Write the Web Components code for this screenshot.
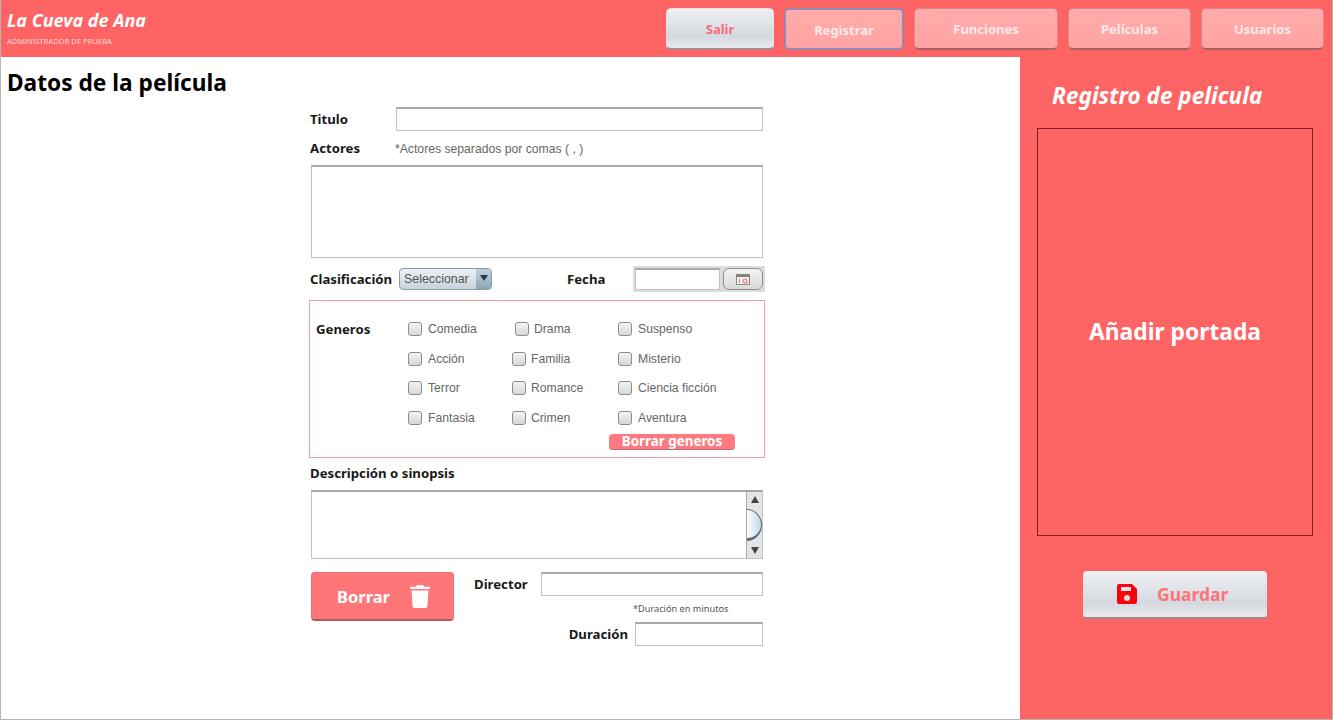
<!DOCTYPE html>
<html lang="es">
<head>
<meta charset="utf-8">
<title>La Cueva de Ana</title>
<style>
    html, body { margin: 0; height: 100%; overflow: hidden; background: #fff; }
    body { font-family: "Noto Sans", "Open Sans", sans-serif; }
</style>
</head>
<body>
<movie-app></movie-app>

<script>
class NavButton extends HTMLElement {
    constructor() {
        super();
        this.attachShadow({ mode: 'open' });
        this.shadowRoot.innerHTML = `
            <style>
                :host {
                    display: flex;
                    align-items: center;
                    justify-content: center;
                    box-sizing: border-box;
                    height: 42px;
                    border-radius: 5px;
                    font: bold 13px "Noto Sans", sans-serif;
                    color: #ffeaea;
                    background: linear-gradient(#ffabab, #ffa3a3);
                    border: 1px solid #df8686;
                    border-bottom: 2px solid #a96262;
                    padding-top: 1px;
                }
                :host([light]) {
                    color: #fb6a78;
                    background: linear-gradient(#eef0f2, #d5d9df 70%, #e6e8ec);
                    border: 1px solid #dfe1e5;
                    border-bottom: 2px solid #a98a90;
                }
                :host([active]) {
                    border: 2px solid #8f8cb0;
                }
            </style>
            <slot></slot>
        `;
    }
}
customElements.define('nav-button', NavButton);

class TopBar extends HTMLElement {
    constructor() {
        super();
        this.attachShadow({ mode: 'open' });
        this.shadowRoot.innerHTML = `
            <style>
                :host {
                    display: flex;
                    justify-content: space-between;
                    box-sizing: border-box;
                    height: 57px;
                    background: #ff6464;
                    padding: 8px 8px 0 6px;
                }
                .brand { color: #fff; }
                .name {
                    font: italic bold 18px/22px "Noto Sans", sans-serif;
                    margin-top: 1px;
                }
                .user {
                    font: 7.6px/10px "Noto Sans", sans-serif;
                    color: #ffd9d9;
                    margin-top: 5px;
                }
                nav { display: flex; gap: 10px; }
                nav-button:nth-child(1) { width: 108px; }
                nav-button:nth-child(2) { width: 120px; }
                nav-button:nth-child(3) { width: 144px; }
                nav-button:nth-child(4) { width: 123px; }
                nav-button:nth-child(5) { width: 123px; }
            </style>
            <div class="brand">
                <div class="name">La Cueva de Ana</div>
                <div class="user">ADMINISTRADOR DE PRUEBA</div>
            </div>
            <nav>
                <nav-button light>Salir</nav-button>
                <nav-button active>Registrar</nav-button>
                <nav-button>Funciones</nav-button>
                <nav-button>Películas</nav-button>
                <nav-button>Usuarios</nav-button>
            </nav>
        `;
    }
}
customElements.define('top-bar', TopBar);

// sunken text box used for inputs and areas
class TextBox extends HTMLElement {
    constructor() {
        super();
        this.attachShadow({ mode: 'open' });
        this.shadowRoot.innerHTML = `
            <style>
                :host {
                    display: flex;
                    justify-content: flex-end;
                    box-sizing: border-box;
                    background: #fff;
                    border: 1px solid #c2c2c2;
                    border-top: 2px solid #a8a8a8;
                }
            </style>
            <slot></slot>
        `;
    }
}
customElements.define('text-box', TextBox);

class GenreCheck extends HTMLElement {
    constructor() {
        super();
        this.attachShadow({ mode: 'open' });
        this.shadowRoot.innerHTML = `
            <style>
                :host {
                    display: flex;
                    align-items: center;
                    gap: var(--check-gap, 6px);
                    font: 12.2px "Liberation Sans", sans-serif;
                    color: #666;
                    height: 16px;
                }
                i {
                    box-sizing: border-box;
                    width: 14px;
                    height: 14px;
                    border: 1px solid #8d8d8d;
                    border-radius: 3px;
                    background: linear-gradient(#f4f4f4, #d7d7d7);
                }
            </style>
            <i></i><slot></slot>
        `;
    }
}
customElements.define('genre-check', GenreCheck);

class GenreBox extends HTMLElement {
    constructor() {
        super();
        this.attachShadow({ mode: 'open' });
        this.shadowRoot.innerHTML = `
            <style>
                :host {
                    display: block;
                    box-sizing: border-box;
                    width: 456px;
                    height: 158px;
                    border: 1px solid #f2a0a0;
                    padding: 20px 0 0 6px;
                }
                .grid {
                    display: grid;
                    grid-template-columns: 92px 104px 106px auto;
                    grid-auto-rows: 16px;
                    row-gap: 13.6px;
                    align-items: center;
                }
                .label { font: bold 13.2px "Noto Sans", sans-serif; color: #1a1a1a; }
                .tight { --check-gap: 5px; }
                .shift { margin-left: 3px; }
                .clear {
                    box-sizing: border-box;
                    width: 126px;
                    height: 16px;
                    margin: 8px 0 0 293px;
                    border-radius: 4px;
                    background: #ff7a80;
                    border-bottom: 1px solid #c76a70;
                    color: #fff;
                    font: bold 13.4px/15px "Noto Sans", sans-serif;
                    text-align: center;
                }
            </style>
            <div class="grid">
                <div class="label">Generos</div>
                <genre-check>Comedia</genre-check>
                <genre-check class="tight shift">Drama</genre-check>
                <genre-check>Suspenso</genre-check>
                <div></div>
                <genre-check>Acción</genre-check>
                <genre-check class="tight">Familia</genre-check>
                <genre-check>Misterio</genre-check>
                <div></div>
                <genre-check>Terror</genre-check>
                <genre-check class="tight">Romance</genre-check>
                <genre-check>Ciencia ficción</genre-check>
                <div></div>
                <genre-check>Fantasia</genre-check>
                <genre-check class="tight">Crimen</genre-check>
                <genre-check>Aventura</genre-check>
            </div>
            <div class="clear">Borrar generos</div>
        `;
    }
}
customElements.define('genre-box', GenreBox);

class MovieForm extends HTMLElement {
    constructor() {
        super();
        this.attachShadow({ mode: 'open' });
        this.shadowRoot.innerHTML = `
            <style>
                :host {
                    display: block;
                    width: 455px;
                    font: bold 13.2px "Noto Sans", sans-serif;
                    color: #1a1a1a;
                }
                .row { display: flex; align-items: center; }
                .hint { font: 12.2px "Liberation Sans", sans-serif; color: #666; padding-top: 2px; }
                .titulo { height: 24px; }
                .titulo span { width: 86px; }
                .titulo text-box { width: 367px; height: 24px; }
                .actores { height: 20px; margin-top: 7px; }
                .actores span:first-child { width: 85px; }
                .area { width: 452px; margin-left: 1px; }
                .area-a { height: 93px; margin-top: 7px; }
                .clasif { height: 26px; margin-top: 8px; }
                .clasif > span:first-child { width: 82px; white-space: nowrap; }
                .select {
                    display: flex;
                    box-sizing: border-box;
                    width: 93px;
                    height: 22px;
                    margin-left: 7px;
                    border: 1px solid #8c9aa6;
                    border-radius: 4px;
                    overflow: hidden;
                    background: linear-gradient(#eef1f4, #c9d2da);
                    font: 12.4px/20px "Liberation Sans", sans-serif;
                    color: #555;
                }
                .select span { flex: 1; padding-left: 4px; }
                .select b {
                    width: 15px;
                    background: linear-gradient(#c3d0dc, #8fa5b8);
                    display: flex;
                    justify-content: center;
                    padding-top: 6px;
                    box-sizing: border-box;
                }
                .fecha { margin-left: 75px; width: 66px; }
                .date {
                    display: flex;
                    align-items: center;
                    box-sizing: border-box;
                    width: 132px;
                    height: 26px;
                    background: #dcdcdc;
                    padding: 2px 2px 2px 2px;
                    gap: 3px;
                }
                .date text-box { width: 85px; height: 22px; }
                .cal {
                    display: flex;
                    align-items: center;
                    justify-content: center;
                    box-sizing: border-box;
                    width: 40px;
                    height: 22px;
                    border: 1px solid #8f8f8f;
                    border-radius: 6px;
                    background: linear-gradient(#f3f3f3, #dadada);
                }
                genre-box { margin: 8px 0 0 -1px; }
                .desc-label { margin-top: 5px; height: 20px; line-height: 20px; }
                .area-b { height: 69px; margin-top: 7px; }
                .scroll {
                    position: relative;
                    box-sizing: border-box;
                    width: 16px;
                    background: #dfe5e9;
                    border: 1px solid #a9a9a9;
                    border-width: 0 0 0 1px;
                    display: flex;
                    flex-direction: column;
                    justify-content: space-between;
                    align-items: center;
                    padding: 4px 0;
                    overflow: hidden;
                }
                .thumb {
                    position: absolute;
                    left: -15px;
                    top: 17px;
                    box-sizing: border-box;
                    width: 30px;
                    height: 32px;
                    border-radius: 50%;
                    border: 1px solid #5d6a75;
                    border-bottom-width: 3px;
                    background: linear-gradient(90deg, #fff 50%, #bcd6e4);
                }
                .bottom { display: flex; margin-top: 13px; }
                .borrar {
                    display: flex;
                    align-items: center;
                    box-sizing: border-box;
                    width: 143px;
                    height: 49px;
                    margin-left: 1px;
                    padding-left: 25px;
                    gap: 20px;
                    border-radius: 4px;
                    background: #ff7678;
                    border: 1px solid #f06e70;
                    border-bottom: 2px solid #a95f60;
                    color: #fff;
                    font: bold 16.5px "Noto Sans", sans-serif;
                }
                .fields { flex: 1; margin-left: 20px; margin-right: 2px; }
                .director { height: 24px; }
                .director span { width: 67px; }
                .director text-box { width: 222px; height: 24px; }
                .note {
                    font: 9.2px/14px "Noto Sans", sans-serif;
                    color: #555;
                    margin: 6px 0 0 159px;
                    height: 20px;
                }
                .duracion { height: 24px; justify-content: flex-end; gap: 7px; }
                .duracion text-box { width: 128px; height: 24px; }
            </style>
            <div class="row titulo"><span>Titulo</span><text-box></text-box></div>
            <div class="row actores"><span>Actores</span><span class="hint">*Actores separados por comas ( , )</span></div>
            <text-box class="area area-a"></text-box>
            <div class="row clasif">
                <span>Clasificación</span>
                <div class="select">
                    <span>Seleccionar</span>
                    <b><svg width="8" height="6" viewBox="0 0 8 6"><path d="M0 0h8L4 6z" fill="#2c3a46"/></svg></b>
                </div>
                <span class="fecha">Fecha</span>
                <div class="date">
                    <text-box></text-box>
                    <div class="cal">
                        <svg width="14" height="11" viewBox="0 0 14 11">
                            <rect x=".5" y=".5" width="13" height="10" fill="#f6f2ea" stroke="#888"/>
                            <rect x="1" y="1" width="12" height="2" fill="#7f7f7f"/>
                            <circle cx="9" cy="7" r="2" fill="none" stroke="#e8708a" stroke-width="1.2"/>
                            <path d="M3.5 5v4" stroke="#999"/>
                        </svg>
                    </div>
                </div>
            </div>
            <genre-box></genre-box>
            <div class="desc-label">Descripción o sinopsis</div>
            <text-box class="area area-b">
                <div class="scroll">
                    <svg width="8" height="7" viewBox="0 0 8 7"><path d="M4 0L8 7H0z" fill="#444"/></svg>
                    <div class="thumb"></div>
                    <svg width="8" height="7" viewBox="0 0 8 7"><path d="M0 0h8L4 7z" fill="#444"/></svg>
                </div>
            </text-box>
            <div class="bottom">
                <div class="borrar">
                    <span>Borrar</span>
                    <svg width="20" height="23" viewBox="0 0 20 23" fill="#fff">
                        <path d="M7 0h6l1 1.800H19a1 1 0 0 1 1 1v1.200H0V2.800a1 1 0 0 1 1-1h5z"/>
                        <path d="M1.500 5.500h17l-1.100 15.700a2 2 0 0 1-2 1.800H4.600a2 2 0 0 1-2-1.800z"/>
                    </svg>
                </div>
                <div class="fields">
                    <div class="row director"><span>Director</span><text-box></text-box></div>
                    <div class="note">*Duración en minutos</div>
                    <div class="row duracion"><span>Duración</span><text-box></text-box></div>
                </div>
            </div>
        `;
    }
}
customElements.define('movie-form', MovieForm);

class SidePanel extends HTMLElement {
    constructor() {
        super();
        this.attachShadow({ mode: 'open' });
        this.shadowRoot.innerHTML = `
            <style>
                :host {
                    display: flex;
                    flex-direction: column;
                    box-sizing: border-box;
                    width: 312px;
                    background: #ff6464;
                    color: #fff;
                    padding-top: 23px;
                }
                h2 {
                    margin: 0 0 0 32px;
                    font: italic bold 22.500px/32px "Noto Sans", sans-serif;
                    color: #fff;
                }
                .cover {
                    display: flex;
                    align-items: center;
                    justify-content: center;
                    box-sizing: border-box;
                    width: 276px;
                    height: 408px;
                    margin: 16px 0 0 17px;
                    border: 1px solid #7c2020;
                    font: bold 22.800px "Noto Sans", sans-serif;
                    padding-bottom: 1px;
                }
                .save {
                    display: flex;
                    align-items: center;
                    box-sizing: border-box;
                    width: 184px;
                    height: 48px;
                    margin: 35px 0 0 63px;
                    padding-left: 34px;
                    gap: 20px;
                    border-radius: 4px;
                    background: linear-gradient(#eef0f2, #d5d9df 70%, #e8eaed);
                    border-bottom: 2px solid #9d8589;
                    color: #fc7478;
                    font: bold 17.500px "Noto Sans", sans-serif;
                }
            </style>
            <h2>Registro de pelicula</h2>
            <div class="cover">Añadir portada</div>
            <div class="save">
                <svg width="20" height="20" viewBox="0 0 20 20">
                    <path fill-rule="evenodd" fill="#ff0008" d="M2 0h13l5 5v13a2 2 0 0 1-2 2H2a2 2 0 0 1-2-2V2a2 2 0 0 1 2-2zM4 3v4h10V3zM10 11a3 3 0 1 0 0 6 3 3 0 0 0 0-6z"/>
                </svg>
                <span>Guardar</span>
            </div>
        `;
    }
}
customElements.define('side-panel', SidePanel);

class MovieApp extends HTMLElement {
    constructor() {
        super();
        this.attachShadow({ mode: 'open' });
        this.shadowRoot.innerHTML = `
            <style>
                :host {
                    display: flex;
                    flex-direction: column;
                    box-sizing: border-box;
                    width: 1333px;
                    height: 720px;
                    overflow: hidden;
                    border: solid #b4b4b4;
                    border-width: 0 1px 1px;
                }
                .body { flex: 1; display: flex; min-height: 0; }
                main { flex: 1; min-width: 0; }
                h1 {
                    margin: 0;
                    padding: 10px 0 0 6px;
                    height: 50px;
                    box-sizing: border-box;
                    font: bold 22.700px/32px "Noto Sans", sans-serif;
                    color: #000;
                }
                movie-form { margin-left: 309px; }
            </style>
            <top-bar></top-bar>
            <div class="body">
                <main>
                    <h1>Datos de la película</h1>
                    <movie-form></movie-form>
                </main>
                <side-panel></side-panel>
            </div>
        `;
    }
}
customElements.define('movie-app', MovieApp);
</script>
</body>
</html>
